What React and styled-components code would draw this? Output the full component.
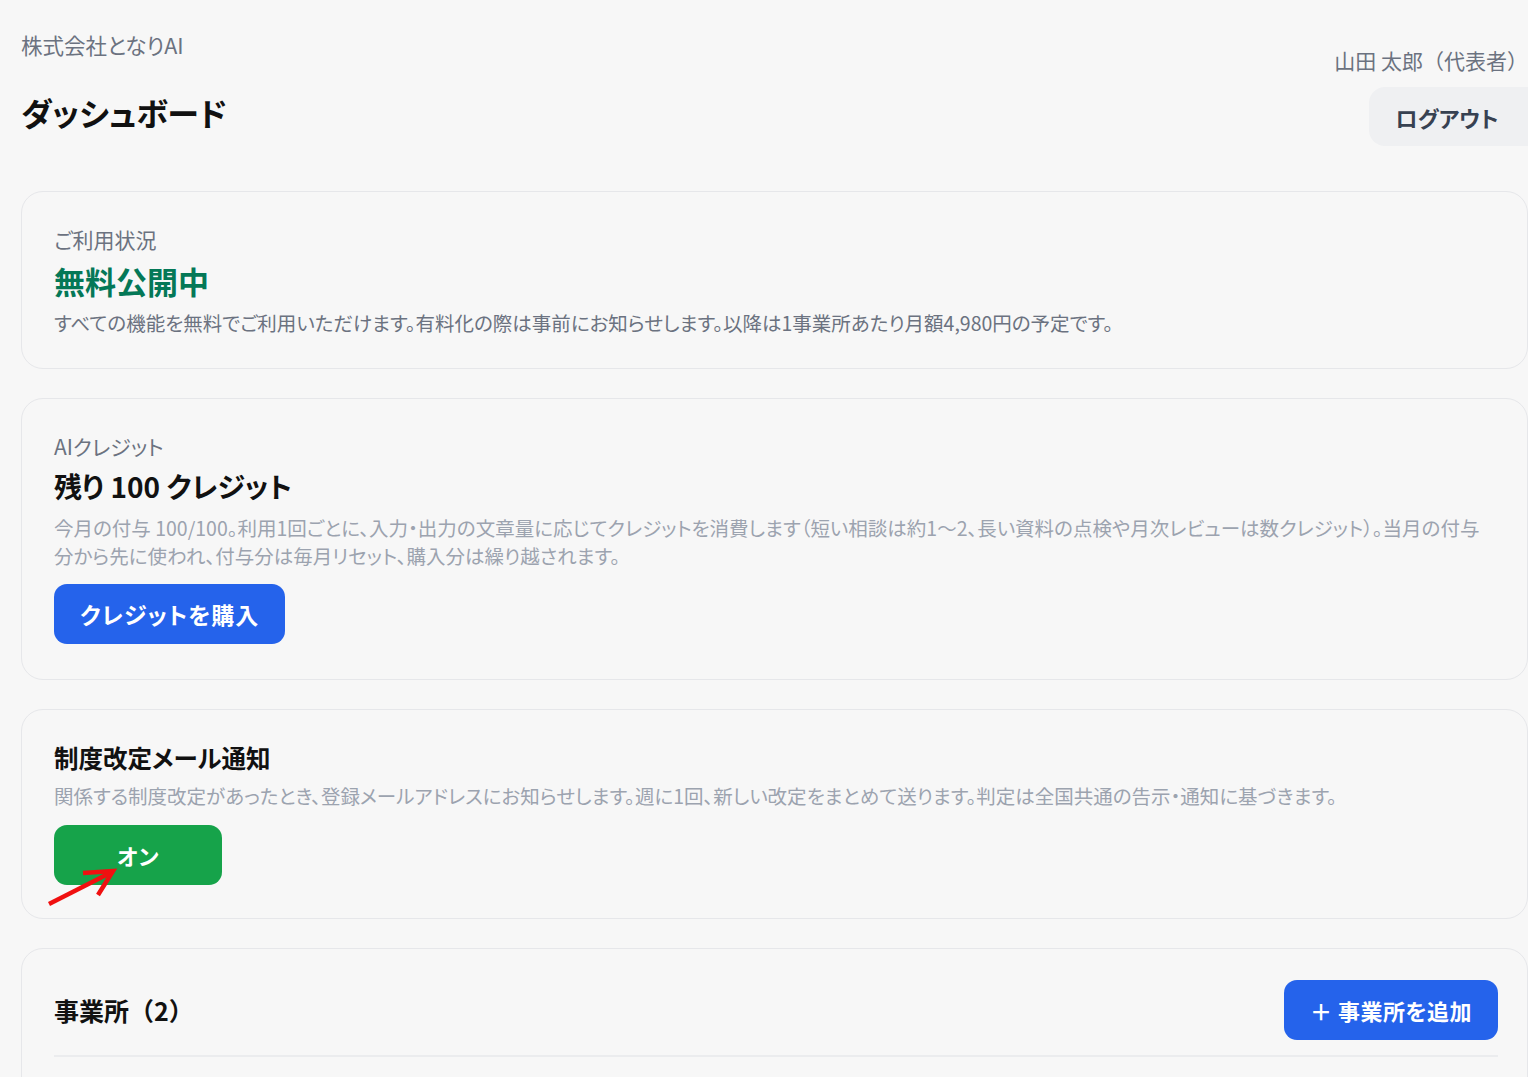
import React from "react";
import styled, { createGlobalStyle } from "styled-components";

const GlobalStyle = createGlobalStyle`
  html, body {
    margin: 0;
    padding: 0;
    background: #f7f7f7;
    overflow: hidden;
  }
  body {
    font-family: "Noto Sans CJK JP", "Noto Sans", sans-serif;
    font-feature-settings: "palt";
    color: #111827;
  }
`;

const Page = styled.div`
  padding: 0 0 0 21px;
  width: 1507px;
`;

const Header = styled.header`
  display: flex;
  justify-content: space-between;
  align-items: flex-start;
  margin-bottom: 45px;
`;

const Brand = styled.div`
  padding-top: 31px;
`;

const Company = styled.div`
  font-size: 21.5px;
  line-height: 28px;
  color: #6b7280;
`;

const PageTitle = styled.h1`
  margin: 31px 0 0;
  font-size: 32px;
  line-height: 44px;
  font-weight: 700;
  color: #111;
`;

const Account = styled.div`
  display: flex;
  flex-direction: column;
  align-items: flex-end;
  padding-top: 46px;
  margin-right: -21px;
`;

const UserName = styled.div`
  font-size: 21px;
  line-height: 28px;
  color: #6b7280;
  margin-right: 21px;
  font-feature-settings: normal;
`;

const LogoutButton = styled.button`
  margin-top: 13px;
  height: 59px;
  width: 180px;
  padding: 0 24px 0 0;
  border: none;
  border-radius: 16px;
  background: #eff0f2;
  font-family: inherit;
  font-feature-settings: "palt";
  font-size: 22px;
  font-weight: 700;
  color: #374151;
`;

const Stack = styled.div`
  display: flex;
  flex-direction: column;
  gap: 29px;
`;

const Card = styled.section`
  border: 1.5px solid #e6e7ea;
  border-radius: 22px;
  padding: ${(p) => p.$pad || "34px 32px 32px"};
  position: relative;
`;

const Label = styled.div`
  font-size: 21px;
  line-height: 28px;
  color: #6b7280;
`;

const BigValue = styled.div`
  margin-top: ${(p) => p.$mt || "6px"};
  font-size: ${(p) => p.$size || "31px"};
  line-height: 44px;
  font-weight: ${(p) => p.$weight || 700};
  color: ${(p) => p.$color || "#111"};
`;

const SectionTitle = styled.h2`
  margin: 0;
  font-size: ${(p) => p.$size || "24.5px"};
  line-height: 34px;
  font-weight: ${(p) => p.$weight || 700};
  color: #111;
  font-feature-settings: ${(p) => (p.$plain ? "normal" : "\"palt\"")};
`;

const Desc = styled.p`
  margin: ${(p) => p.$mt || "4px"} 0 0;
  font-size: 19.5px;
  line-height: 28px;
  color: ${(p) => (p.$light ? "#9ca3af" : "#6b7280")};
`;

const ActionButton = styled.button`
  height: 60px;
  padding: 0 ${(p) => p.$px || "24px"};
  border: none;
  border-radius: 13px;
  background: ${(p) => (p.$green ? "#16a34a" : "#2563eb")};
  color: #fff;
  font-family: inherit;
  font-feature-settings: "palt";
  font-size: ${(p) => p.$size || "22px"};
  font-weight: 700;
  letter-spacing: ${(p) => p.$ls || "0.5px"};
  min-width: ${(p) => p.$min || "auto"};
`;

const ButtonSlot = styled.div`
  position: relative;
  margin-top: ${(p) => p.$mt || "14px"};
  display: inline-block;
`;

/* red annotation arrow drawn over the toggle button */
const Arrow = styled.svg`
  position: absolute;
  left: -8px;
  top: 38px;
  overflow: visible;
`;

const Row = styled.div`
  display: flex;
  justify-content: space-between;
  align-items: center;
`;

const Divider = styled.div`
  background: #ebecee;
  margin-top: 15px;
  height: 1.5px;
`;

const Filler = styled.div`
  height: 60px;
`;

export default function App() {
  return (
    <>
      <GlobalStyle />
      <Page>
        <Header>
          <Brand>
            <Company>株式会社となりAI</Company>
            <PageTitle>ダッシュボード</PageTitle>
          </Brand>
          <Account>
            <UserName>山田 太郎（代表者）</UserName>
            <LogoutButton>ログアウト</LogoutButton>
          </Account>
        </Header>

        <Stack>
          <Card $pad="33px 32px 31px">
            <Label>ご利用状況</Label>
            <BigValue $color="#047857">無料公開中</BigValue>
            <Desc $mt="6px">
              すべての機能を無料でご利用いただけます。有料化の際は事前にお知らせします。以降は1事業所あたり月額4,980円の予定です。
            </Desc>
          </Card>

          <Card $pad="33px 32px 35px">
            <Label>AIクレジット</Label>
            <BigValue $mt="4px" $size="28px" $weight={600}>
              残り 100 クレジット
            </BigValue>
            <Desc $light $mt="6px">
              今月の付与 100/100。利用1回ごとに、入力・出力の文章量に応じてクレジットを消費します（短い相談は約1〜2、長い資料の点検や月次レビューは数クレジット）。当月の付与分から先に使われ、付与分は毎月リセット、購入分は繰り越されます。
            </Desc>
            <ButtonSlot>
              <ActionButton $px="26px" $size="23px" $ls="1px">
                クレジットを購入
              </ActionButton>
            </ButtonSlot>
          </Card>

          <Card $pad="31px 32px 33px">
            <SectionTitle>制度改定メール通知</SectionTitle>
            <Desc $light $mt="7px">
              関係する制度改定があったとき、登録メールアドレスにお知らせします。週に1回、新しい改定をまとめて送ります。判定は全国共通の告示・通知に基づきます。
            </Desc>
            <ButtonSlot $mt="15px">
              <ActionButton $green $min="168px">
                オン
              </ActionButton>
              <Arrow width="80" height="50" viewBox="0 0 80 50">
                <g stroke="#f01010" strokeWidth="4.5" strokeLinecap="butt" fill="none">
                  <line x1="3" y1="41" x2="66" y2="9" />
                  <polyline points="37,10 67,8 52,32" />
                </g>
              </Arrow>
            </ButtonSlot>
          </Card>

          <Card $pad="31px 29px 20px 32px">
            <Row>
              <SectionTitle $plain $size="25px" $weight={600}>
                事業所（2）
              </SectionTitle>
              <ActionButton $px="26px">＋ 事業所を追加</ActionButton>
            </Row>
            <Divider />
            <Filler />
          </Card>
        </Stack>
      </Page>
    </>
  );
}
